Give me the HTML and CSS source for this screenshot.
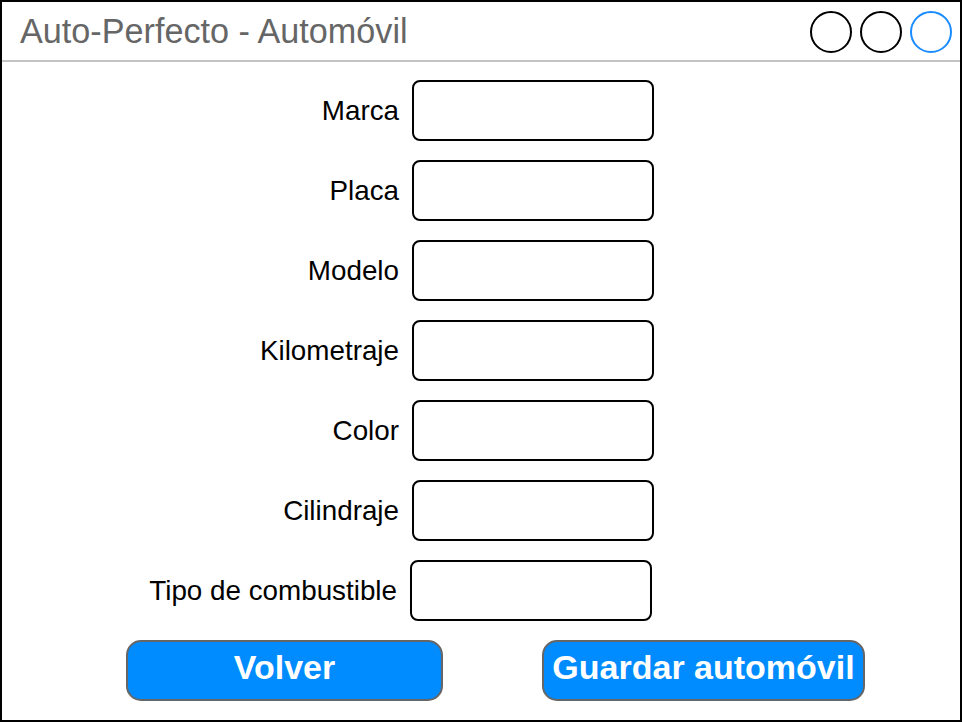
FILE: index.html
```html
<!DOCTYPE html>
<html lang="es">
<head>
<meta charset="utf-8">
<title>Auto-Perfecto - Automóvil</title>
<link rel="stylesheet" href="styles.css">
</head>
<body>
<div class="window">
  <header class="titlebar">
    <div class="title">Auto-Perfecto - Automóvil</div>
    <div class="controls">
      <span class="dot"></span>
      <span class="dot"></span>
      <span class="dot dot-blue"></span>
    </div>
  </header>
  <main class="form">
    <div class="row"><label class="label">Marca</label><div class="field"></div></div>
    <div class="row"><label class="label">Placa</label><div class="field"></div></div>
    <div class="row"><label class="label">Modelo</label><div class="field"></div></div>
    <div class="row"><label class="label">Kilometraje</label><div class="field"></div></div>
    <div class="row"><label class="label">Color</label><div class="field"></div></div>
    <div class="row"><label class="label">Cilindraje</label><div class="field"></div></div>
    <div class="row row-shift"><label class="label">Tipo de combustible</label><div class="field"></div></div>
    <div class="actions">
      <button class="btn btn-back">Volver</button>
      <button class="btn btn-save">Guardar automóvil</button>
    </div>
  </main>
</div>
</body>
</html>
```

FILE: styles.css
```css
* { box-sizing: border-box; }
html, body { margin: 0; padding: 0; background: #fff; }
body { font-family: "Liberation Sans", Arial, sans-serif; }

.window {
  width: 962px;
  height: 722px;
  border: 2px solid #000;
  background: #fff;
  display: flex;
  flex-direction: column;
}

.titlebar {
  height: 60px;
  border-bottom: 2px solid #c4c4c4;
  display: flex;
  align-items: center;
  justify-content: space-between;
  padding: 0 8px 0 18px;
  flex: none;
}

.title {
  font-size: 34.2px;
  color: #666;
  line-height: 1;
}

.controls {
  display: flex;
  gap: 8px;
  margin-top: 1px;
}

.dot {
  width: 42px;
  height: 42px;
  border: 2px solid #000;
  border-radius: 50%;
  display: block;
}

.dot-blue { border-color: #1a8cff; }

.form {
  padding-top: 18px;
  display: flex;
  flex-direction: column;
  gap: 19px;
}

.row {
  display: flex;
  align-items: center;
  gap: 13px;
}

.row-shift { margin-left: -2px; }

.label {
  width: 397px;
  text-align: right;
  font-size: 27.8px;
  color: #000;
  line-height: 1;
}

.field {
  width: 242px;
  height: 61px;
  border: 2px solid #000;
  border-radius: 8px;
  background: #fff;
}

.actions {
  display: flex;
  gap: 99px;
  padding-left: 124px;
}

.btn {
  height: 61px;
  border: 2px solid #666;
  border-radius: 15px;
  background: #008cff;
  color: #fff;
  font-family: "Liberation Sans", Arial, sans-serif;
  font-weight: bold;
  font-size: 34px;
  padding: 0 0 7px 0;
  line-height: 1;
  display: flex;
  align-items: center;
  justify-content: center;
}

.btn-back { width: 317px; }
.btn-save { width: 323px; }
```
